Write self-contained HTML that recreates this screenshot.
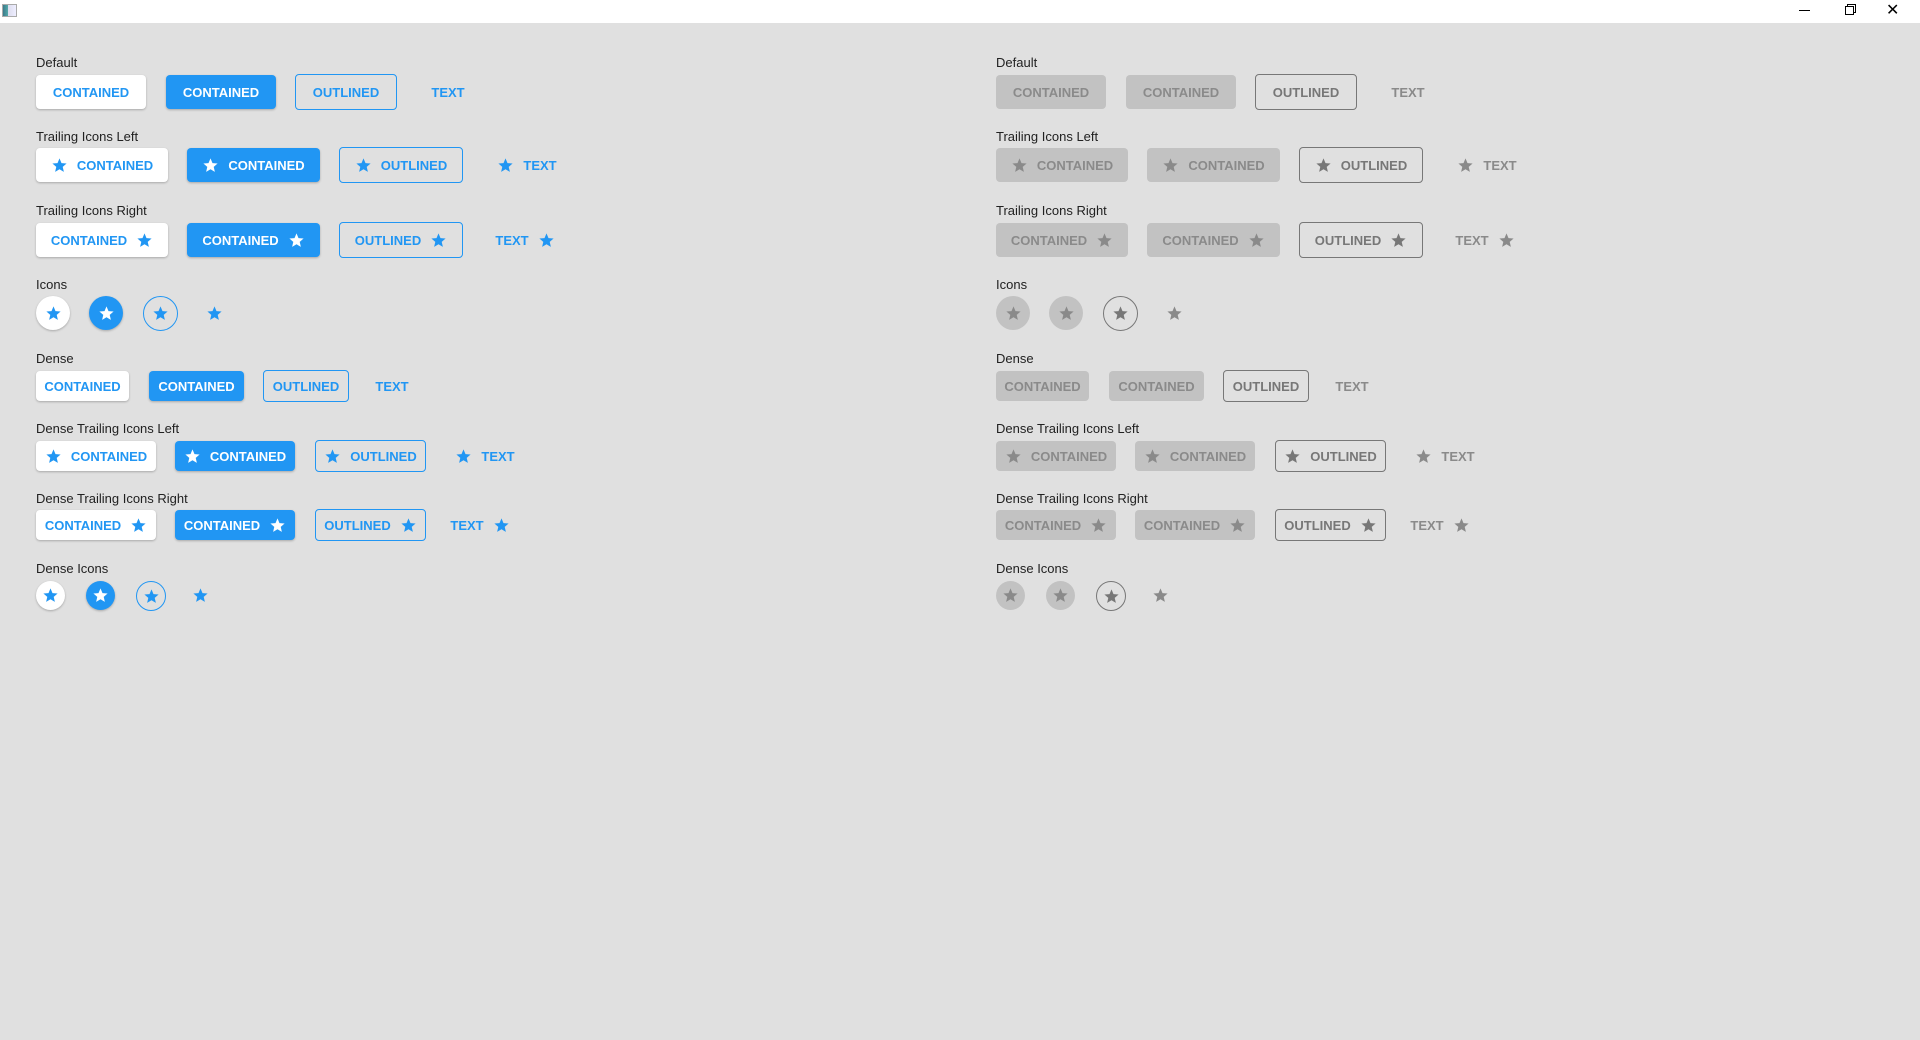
<!DOCTYPE html>
<html><head><meta charset="utf-8"><style>
*{margin:0;padding:0;box-sizing:border-box}
body{width:1920px;height:1040px;background:#e0e0e0;font-family:"Liberation Sans",sans-serif;position:relative;overflow:hidden}
.tb{position:absolute;left:0;top:0;width:1920px;height:23px;background:#fff}
.lab{position:absolute;font-size:13px;color:#212121;line-height:16px}
.b{position:absolute;display:flex;align-items:center;justify-content:center;border-radius:4px;font-size:13px;font-weight:bold;color:#2196f3;white-space:nowrap}
.b svg{width:17px;height:17px;fill:currentColor;flex:none}
.b .l{margin-right:9px}.b .r{margin-left:9px}
.w{background:#fff;box-shadow:0 1px 2px rgba(0,0,0,.25)}
.f{background:#2196f3;color:#fff;box-shadow:0 1px 2px rgba(0,0,0,.25)}
.o{border:1px solid #2196f3}
.c{border-radius:50%}
.d .b{color:#8c8c8c}
.d .w,.d .f{background:#c2c2c2;box-shadow:none;color:#8a8a8a}
.d .o{border-color:#777;color:#777}
.d .t{color:#8a8a8a}
.col{position:absolute;top:0;width:960px;height:1040px}
</style></head><body>
<div class="tb">
<div style="position:absolute;left:2px;top:4px;width:15px;height:13px;border:1px solid #aaa;background:linear-gradient(90deg,#3a7a8a 0,#5aa 40%,#dde 40%,#eef 100%)"></div>
<div style="position:absolute;left:1799px;top:10px;width:11px;height:1px;background:#000"></div>
<div style="position:absolute;left:1845px;top:6px;width:9px;height:9px;border:1px solid #000;background:#fff;box-shadow:2px -2px 0 -1px #fff,2px -2px 0 0 #000"></div>
<div style="position:absolute;left:1886px;top:3px;font-size:16px;line-height:16px;color:#000">✕</div>
</div>
<svg width="0" height="0" style="position:absolute"><defs><symbol id="s" viewBox="0 0 24 24"><path d="M12 17.27L18.18 21l-1.64-7.03L22 9.24l-7.19-.61L12 2 9.19 8.63 2 9.24l5.46 4.73L5.82 21z"/></symbol></defs></svg>

<div class="col" style="left:0">
<div class="lab" style="left:36px;top:55px">Default</div>
<div class="b w" style="left:36px;top:75px;width:110px;height:34px">CONTAINED</div>
<div class="b f" style="left:166px;top:75px;width:110px;height:34px">CONTAINED</div>
<div class="b o" style="left:295px;top:74px;width:102px;height:36px">OUTLINED</div>
<div class="b t" style="left:415px;top:75px;width:66px;height:34px">TEXT</div>

<div class="lab" style="left:36px;top:129px">Trailing Icons Left</div>
<div class="b w" style="left:36px;top:148px;width:132px;height:34px"><svg class="l"><use href="#s"/></svg>CONTAINED</div>
<div class="b f" style="left:187px;top:148px;width:133px;height:34px"><svg class="l"><use href="#s"/></svg>CONTAINED</div>
<div class="b o" style="left:339px;top:147px;width:124px;height:36px"><svg class="l"><use href="#s"/></svg>OUTLINED</div>
<div class="b t" style="left:482px;top:148px;width:90px;height:34px"><svg class="l"><use href="#s"/></svg>TEXT</div>

<div class="lab" style="left:36px;top:203px">Trailing Icons Right</div>
<div class="b w" style="left:36px;top:223px;width:132px;height:34px">CONTAINED<svg class="r"><use href="#s"/></svg></div>
<div class="b f" style="left:187px;top:223px;width:133px;height:34px">CONTAINED<svg class="r"><use href="#s"/></svg></div>
<div class="b o" style="left:339px;top:222px;width:124px;height:36px">OUTLINED<svg class="r"><use href="#s"/></svg></div>
<div class="b t" style="left:480px;top:223px;width:90px;height:34px">TEXT<svg class="r"><use href="#s"/></svg></div>

<div class="lab" style="left:36px;top:277px">Icons</div>
<div class="b w c" style="left:36px;top:296px;width:34px;height:34px"><svg><use href="#s"/></svg></div>
<div class="b f c" style="left:89px;top:296px;width:34px;height:34px"><svg><use href="#s"/></svg></div>
<div class="b o c" style="left:143px;top:296px;width:35px;height:35px"><svg><use href="#s"/></svg></div>
<div class="b t c" style="left:197px;top:296px;width:34px;height:34px"><svg><use href="#s"/></svg></div>

<div class="lab" style="left:36px;top:351px">Dense</div>
<div class="b w" style="left:36px;top:371px;width:93px;height:30px">CONTAINED</div>
<div class="b f" style="left:149px;top:371px;width:95px;height:30px">CONTAINED</div>
<div class="b o" style="left:263px;top:370px;width:86px;height:32px">OUTLINED</div>
<div class="b t" style="left:368px;top:371px;width:48px;height:30px">TEXT</div>

<div class="lab" style="left:36px;top:421px">Dense Trailing Icons Left</div>
<div class="b w" style="left:36px;top:441px;width:120px;height:30px"><svg class="l"><use href="#s"/></svg>CONTAINED</div>
<div class="b f" style="left:175px;top:441px;width:120px;height:30px"><svg class="l"><use href="#s"/></svg>CONTAINED</div>
<div class="b o" style="left:315px;top:440px;width:111px;height:32px"><svg class="l"><use href="#s"/></svg>OUTLINED</div>
<div class="b t" style="left:445px;top:441px;width:80px;height:30px"><svg class="l"><use href="#s"/></svg>TEXT</div>

<div class="lab" style="left:36px;top:491px">Dense Trailing Icons Right</div>
<div class="b w" style="left:36px;top:510px;width:120px;height:30px">CONTAINED<svg class="r"><use href="#s"/></svg></div>
<div class="b f" style="left:175px;top:510px;width:120px;height:30px">CONTAINED<svg class="r"><use href="#s"/></svg></div>
<div class="b o" style="left:315px;top:509px;width:111px;height:32px">OUTLINED<svg class="r"><use href="#s"/></svg></div>
<div class="b t" style="left:440px;top:510px;width:80px;height:30px">TEXT<svg class="r"><use href="#s"/></svg></div>

<div class="lab" style="left:36px;top:561px">Dense Icons</div>
<div class="b w c" style="left:36px;top:581px;width:29px;height:29px"><svg><use href="#s"/></svg></div>
<div class="b f c" style="left:86px;top:581px;width:29px;height:29px"><svg><use href="#s"/></svg></div>
<div class="b o c" style="left:136px;top:581px;width:30px;height:30px"><svg><use href="#s"/></svg></div>
<div class="b t c" style="left:186px;top:581px;width:29px;height:29px"><svg><use href="#s"/></svg></div>
</div>

<div class="col d" style="left:960px">
<div class="lab" style="left:36px;top:55px">Default</div>
<div class="b w" style="left:36px;top:75px;width:110px;height:34px">CONTAINED</div>
<div class="b f" style="left:166px;top:75px;width:110px;height:34px">CONTAINED</div>
<div class="b o" style="left:295px;top:74px;width:102px;height:36px">OUTLINED</div>
<div class="b t" style="left:415px;top:75px;width:66px;height:34px">TEXT</div>

<div class="lab" style="left:36px;top:129px">Trailing Icons Left</div>
<div class="b w" style="left:36px;top:148px;width:132px;height:34px"><svg class="l"><use href="#s"/></svg>CONTAINED</div>
<div class="b f" style="left:187px;top:148px;width:133px;height:34px"><svg class="l"><use href="#s"/></svg>CONTAINED</div>
<div class="b o" style="left:339px;top:147px;width:124px;height:36px"><svg class="l"><use href="#s"/></svg>OUTLINED</div>
<div class="b t" style="left:482px;top:148px;width:90px;height:34px"><svg class="l"><use href="#s"/></svg>TEXT</div>

<div class="lab" style="left:36px;top:203px">Trailing Icons Right</div>
<div class="b w" style="left:36px;top:223px;width:132px;height:34px">CONTAINED<svg class="r"><use href="#s"/></svg></div>
<div class="b f" style="left:187px;top:223px;width:133px;height:34px">CONTAINED<svg class="r"><use href="#s"/></svg></div>
<div class="b o" style="left:339px;top:222px;width:124px;height:36px">OUTLINED<svg class="r"><use href="#s"/></svg></div>
<div class="b t" style="left:480px;top:223px;width:90px;height:34px">TEXT<svg class="r"><use href="#s"/></svg></div>

<div class="lab" style="left:36px;top:277px">Icons</div>
<div class="b w c" style="left:36px;top:296px;width:34px;height:34px"><svg><use href="#s"/></svg></div>
<div class="b f c" style="left:89px;top:296px;width:34px;height:34px"><svg><use href="#s"/></svg></div>
<div class="b o c" style="left:143px;top:296px;width:35px;height:35px"><svg><use href="#s"/></svg></div>
<div class="b t c" style="left:197px;top:296px;width:34px;height:34px"><svg><use href="#s"/></svg></div>

<div class="lab" style="left:36px;top:351px">Dense</div>
<div class="b w" style="left:36px;top:371px;width:93px;height:30px">CONTAINED</div>
<div class="b f" style="left:149px;top:371px;width:95px;height:30px">CONTAINED</div>
<div class="b o" style="left:263px;top:370px;width:86px;height:32px">OUTLINED</div>
<div class="b t" style="left:368px;top:371px;width:48px;height:30px">TEXT</div>

<div class="lab" style="left:36px;top:421px">Dense Trailing Icons Left</div>
<div class="b w" style="left:36px;top:441px;width:120px;height:30px"><svg class="l"><use href="#s"/></svg>CONTAINED</div>
<div class="b f" style="left:175px;top:441px;width:120px;height:30px"><svg class="l"><use href="#s"/></svg>CONTAINED</div>
<div class="b o" style="left:315px;top:440px;width:111px;height:32px"><svg class="l"><use href="#s"/></svg>OUTLINED</div>
<div class="b t" style="left:445px;top:441px;width:80px;height:30px"><svg class="l"><use href="#s"/></svg>TEXT</div>

<div class="lab" style="left:36px;top:491px">Dense Trailing Icons Right</div>
<div class="b w" style="left:36px;top:510px;width:120px;height:30px">CONTAINED<svg class="r"><use href="#s"/></svg></div>
<div class="b f" style="left:175px;top:510px;width:120px;height:30px">CONTAINED<svg class="r"><use href="#s"/></svg></div>
<div class="b o" style="left:315px;top:509px;width:111px;height:32px">OUTLINED<svg class="r"><use href="#s"/></svg></div>
<div class="b t" style="left:440px;top:510px;width:80px;height:30px">TEXT<svg class="r"><use href="#s"/></svg></div>

<div class="lab" style="left:36px;top:561px">Dense Icons</div>
<div class="b w c" style="left:36px;top:581px;width:29px;height:29px"><svg><use href="#s"/></svg></div>
<div class="b f c" style="left:86px;top:581px;width:29px;height:29px"><svg><use href="#s"/></svg></div>
<div class="b o c" style="left:136px;top:581px;width:30px;height:30px"><svg><use href="#s"/></svg></div>
<div class="b t c" style="left:186px;top:581px;width:29px;height:29px"><svg><use href="#s"/></svg></div>
</div>
</body></html>
